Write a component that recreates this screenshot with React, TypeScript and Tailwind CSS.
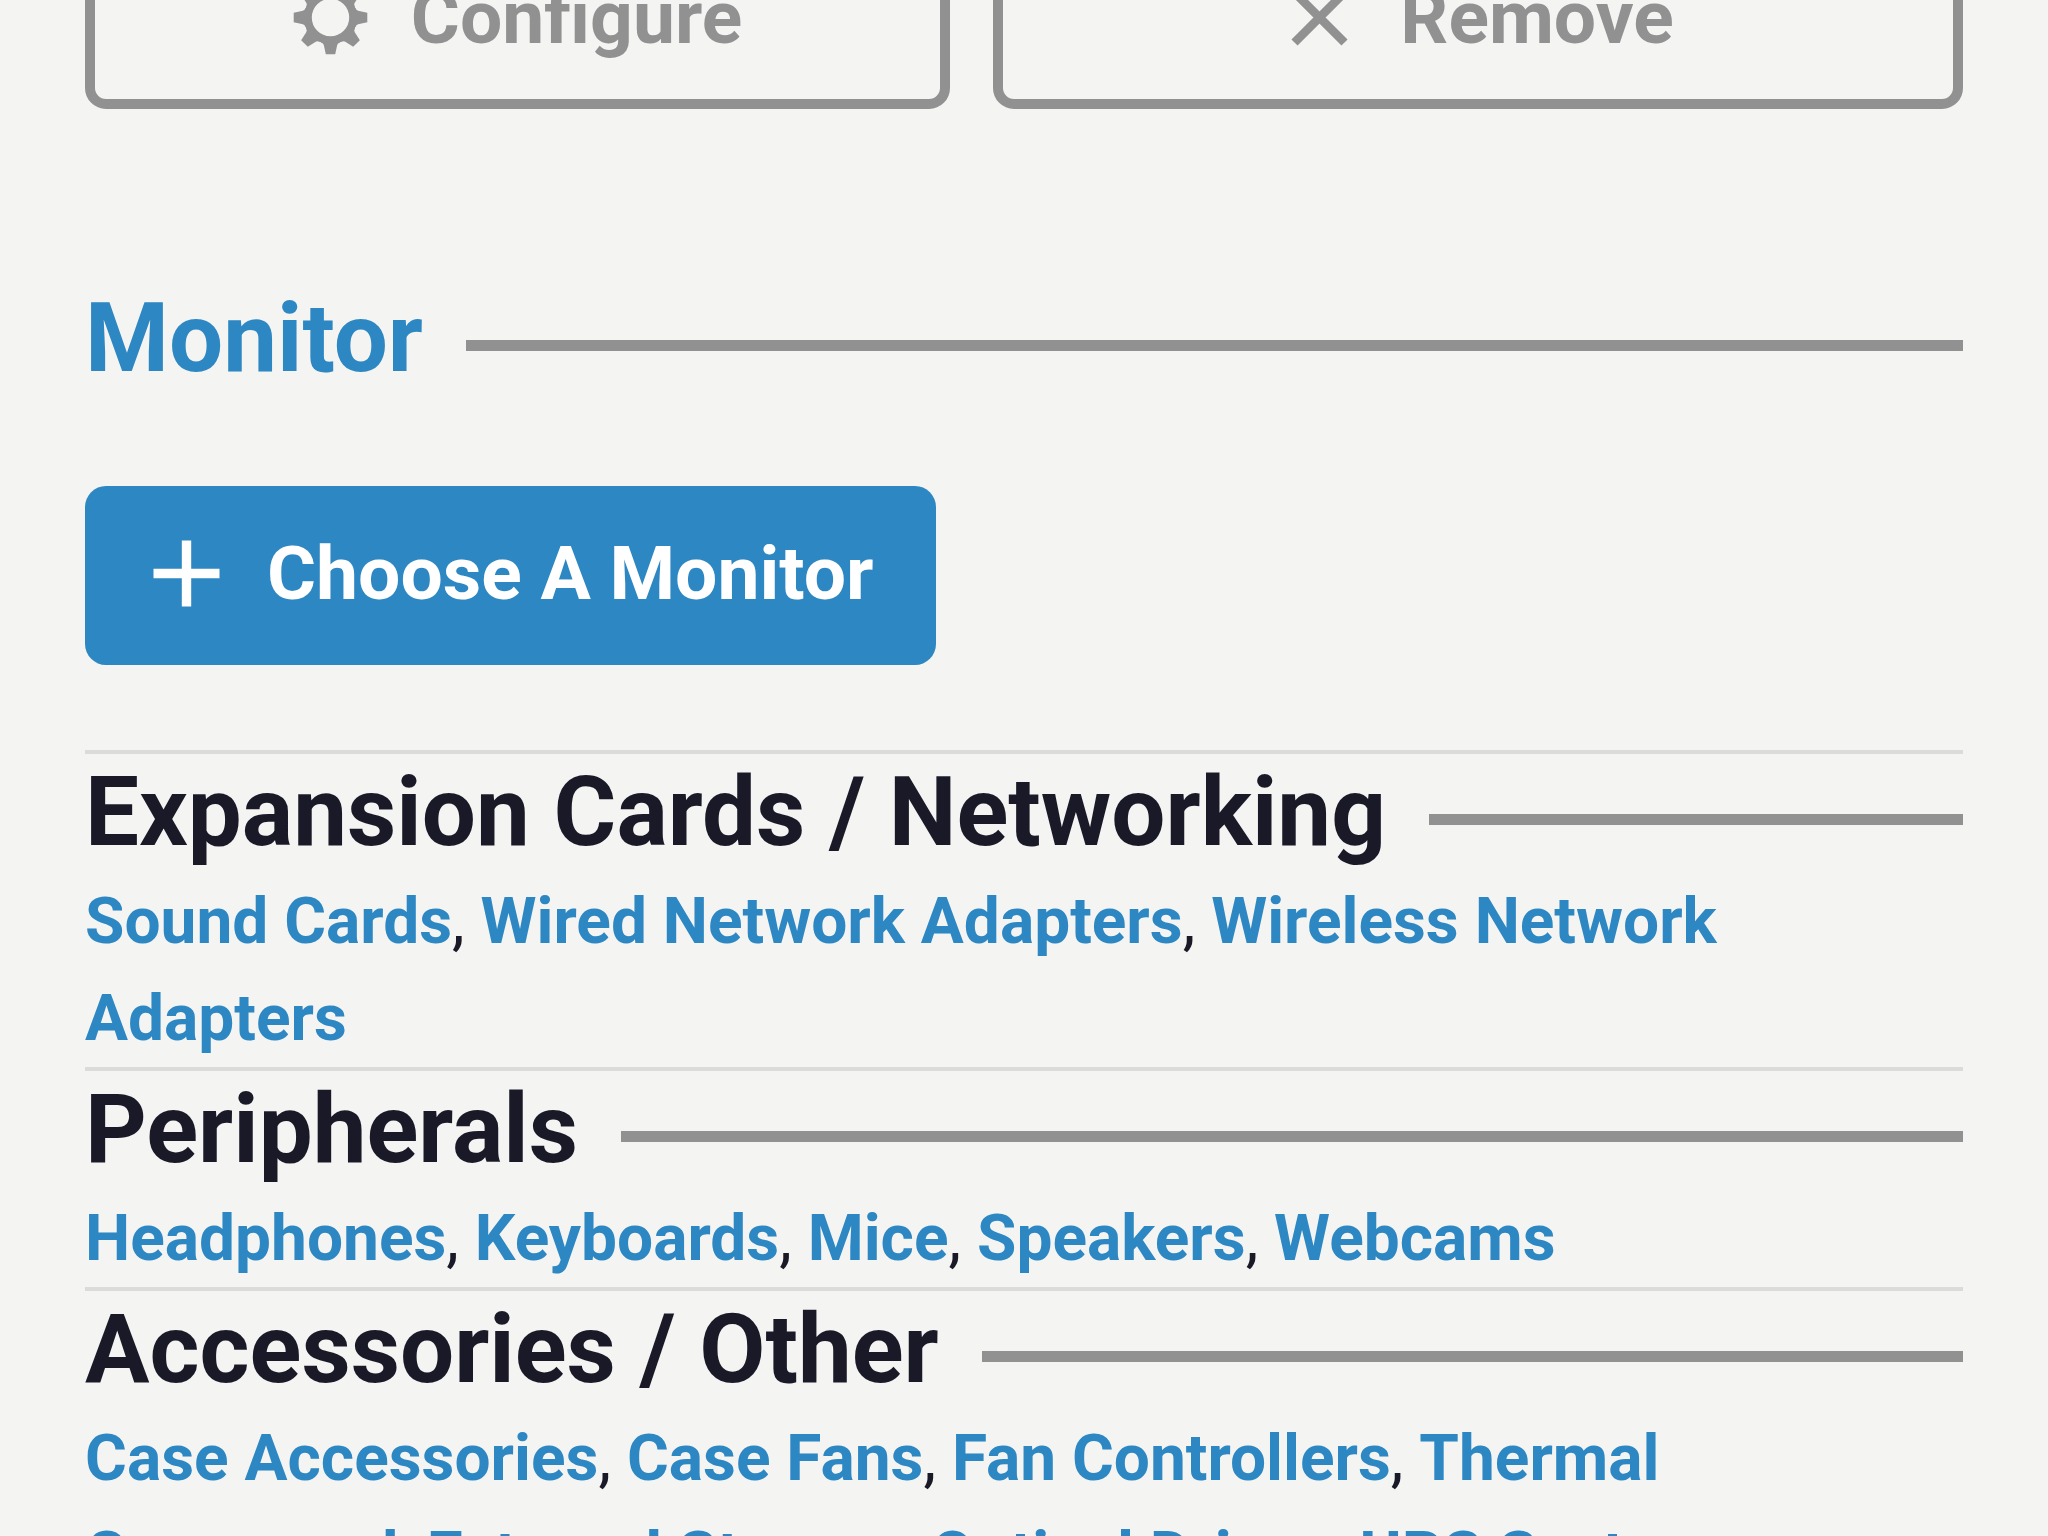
import { Fragment, type ReactNode } from 'react';

const SECTIONS = [
  {
    title: 'Expansion Cards / Networking',
    links: ['Sound Cards', 'Wired Network Adapters', 'Wireless Network Adapters'],
  },
  {
    title: 'Peripherals',
    links: ['Headphones', 'Keyboards', 'Mice', 'Speakers', 'Webcams'],
  },
  {
    title: 'Accessories / Other',
    links: [
      'Case Accessories',
      'Case Fans',
      'Fan Controllers',
      'Thermal Compound',
      'External Storage',
      'Optical Drives',
      'UPS Systems',
    ],
  },
];

const TEETH = [0, 45, 90, 135, 180, 225, 270, 315];

function GearIcon() {
  return (
    <svg viewBox="-37.5 -37.5 75 75" className="size-[75px] shrink-0" aria-hidden="true">
      <circle r="22.6" fill="none" stroke="currentColor" strokeWidth="7.8" />
      {TEETH.map((angle) => (
        <path
          key={angle}
          d="M-9.6 23.5 L-9.4 25 Q-7.2 25.6 -6.7 27.6 L-4.7 36.8 H4.7 L6.7 27.6 Q7.2 25.6 9.4 25 L9.6 23.5Z"
          fill="currentColor"
          transform={`rotate(${angle})`}
        />
      ))}
    </svg>
  );
}

function CrossIcon() {
  return (
    <svg viewBox="-37.5 -37.5 75 75" className="size-[75px] shrink-0" aria-hidden="true">
      <path d="M-25 -25 L25 25 M-25 25 L25 -25" fill="none" stroke="currentColor" strokeWidth="8.6" />
    </svg>
  );
}

function PlusIcon() {
  return (
    <svg viewBox="-37.5 -37.5 75 75" className="size-[75px] shrink-0" aria-hidden="true">
      <path d="M-33 0 H33 M0 -33 V33" fill="none" stroke="currentColor" strokeWidth="9.4" />
    </svg>
  );
}

function SectionHeading({ children, accent = false }: { children: ReactNode; accent?: boolean }) {
  return (
    <h2 className="flex items-center gap-[43px] text-[96px] leading-[116px] font-bold">
      <span className={accent ? 'text-[#2d87c3]' : 'text-[#191927]'}>{children}</span>
      <span className="mt-[14px] h-[11px] flex-1 bg-[#919191]" />
    </h2>
  );
}

function OutlineButton({ icon, label }: { icon: ReactNode; label: string }) {
  return (
    <button
      type="button"
      className="flex items-center justify-center gap-[43px] rounded-[21px] border-10 border-[#919191] pt-10 pb-11 text-[75px] leading-[75px] font-bold text-[#919191]"
    >
      {icon}
      {label}
    </button>
  );
}

export default function App() {
  return (
    <div className="h-screen overflow-hidden bg-[#f4f4f2] px-[85px] font-[Roboto,sans-serif] text-[#191927]">
      {/* Product actions, partly scrolled off the top */}
      <div className="-mt-[70px] grid grid-cols-[865fr_970fr] gap-[43px]">
        <OutlineButton icon={<GearIcon />} label="Configure" />
        <OutlineButton icon={<CrossIcon />} label="Remove" />
      </div>

      {/* Monitor */}
      <section className="mt-[171px]">
        <SectionHeading accent>Monitor</SectionHeading>
        <button
          type="button"
          className="mt-[90px] flex items-center gap-[43px] rounded-[21px] bg-[#2d87c3] pt-[50px] pr-[62px] pb-[54px] pl-16 text-[75px] leading-[75px] font-bold text-white"
        >
          <PlusIcon />
          Choose A Monitor
        </button>
      </section>

      {/* Other part categories */}
      <div className="mt-[85px]">
        {SECTIONS.map((section) => (
          <section key={section.title} className="border-t-4 border-[#dbdbd9]">
            <SectionHeading>{section.title}</SectionHeading>
            <p className="mt-[3px] text-[64px] leading-[97px]">
              {section.links.map((link, i) => (
                <Fragment key={link}>
                  {i > 0 && ', '}
                  <a href="#" className="font-bold text-[#2d87c3]">{link}</a>
                </Fragment>
              ))}
            </p>
          </section>
        ))}
      </div>
    </div>
  );
}
